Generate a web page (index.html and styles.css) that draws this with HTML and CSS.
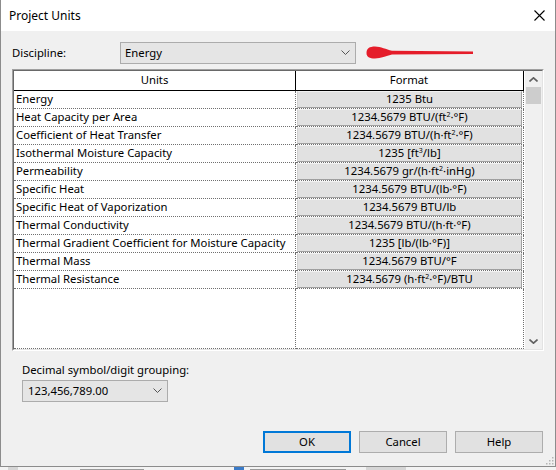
FILE: index.html
```html
<!DOCTYPE html>
<html lang="en">
  <head>
    <meta charset="UTF-8" />
    <title>Project Units</title>
    <link rel="stylesheet" href="styles.css">
  </head>
  <body>
    <div class="dialog">
      <div class="titlebar">
        <span class="title">Project Units</span>
        <svg class="close" width="11" height="11" viewBox="0 0 11 11">
          <path d="M0.5 0.5 L10.5 10.5 M10.5 0.5 L0.5 10.5" stroke="#000" stroke-width="1.1" fill="none" />
        </svg>
      </div>

      <div class="body">
        <div class="discipline">
          <label class="label">Discipline:</label>
          <div class="combo wide">
            <span>Energy</span>
            <svg width="9" height="5" viewBox="0 0 9 5"><path d="M0.5 0.5 L4.5 4.5 L8.5 0.5" stroke="#555" fill="none" /></svg>
          </div>
          <svg class="arrow" width="108" height="13" viewBox="0 0 108 13">
            <path d="M0.5 7 C0.5 2.5 3.5 0.5 9 0.5 C15 0.5 20 3.5 26 4.8 L107 5.4 L107 8 L26 8.6 C20 10 15 12.5 9 12.5 C3.5 12.5 0.5 11 0.5 7 Z" fill="#e51d2a" />
          </svg>
        </div>

        <div class="grid-box">
          <div class="grid-inner">
            <div class="grid">
              <div class="row head">
                <div class="cell units">Units</div>
                <div class="cell format">Format</div>
              </div>
              <div class="row"><div class="cell units">Energy</div><div class="cell format"><span class="val">1235 Btu</span></div></div>
              <div class="row"><div class="cell units">Heat Capacity per Area</div><div class="cell format"><span class="val">1234.5679 BTU/(ft<sup>2</sup>·°F)</span></div></div>
              <div class="row"><div class="cell units">Coefficient of Heat Transfer</div><div class="cell format"><span class="val">1234.5679 BTU/(h·ft<sup>2</sup>·°F)</span></div></div>
              <div class="row"><div class="cell units">Isothermal Moisture Capacity</div><div class="cell format"><span class="val">1235 [ft<sup>3</sup>/lb]</span></div></div>
              <div class="row"><div class="cell units">Permeability</div><div class="cell format"><span class="val">1234.5679 gr/(h·ft<sup>2</sup>·inHg)</span></div></div>
              <div class="row"><div class="cell units">Specific Heat</div><div class="cell format"><span class="val">1234.5679 BTU/(lb·°F)</span></div></div>
              <div class="row"><div class="cell units">Specific Heat of Vaporization</div><div class="cell format"><span class="val">1234.5679 BTU/lb</span></div></div>
              <div class="row"><div class="cell units">Thermal Conductivity</div><div class="cell format"><span class="val">1234.5679 BTU/(h·ft·°F)</span></div></div>
              <div class="row"><div class="cell units">Thermal Gradient Coefficient for Moisture Capacity</div><div class="cell format"><span class="val">1235 [lb/(lb·°F)]</span></div></div>
              <div class="row"><div class="cell units">Thermal Mass</div><div class="cell format"><span class="val">1234.5679 BTU/°F</span></div></div>
              <div class="row"><div class="cell units">Thermal Resistance</div><div class="cell format"><span class="val">1234.5679 (h·ft<sup>2</sup>·°F)/BTU</span></div></div>
              <div class="row filler"><div class="cell units"></div><div class="cell format"></div></div>
            </div>
            <div class="gap"></div>
            <div class="scrollbar">
              <div class="sb-btn">
                <svg width="9" height="5" viewBox="0 0 9 5"><path d="M0.5 4.5 L4.5 0.8 L8.5 4.5" stroke="#606060" stroke-width="1.6" fill="none" /></svg>
              </div>
              <div class="sb-thumb"></div>
              <div class="sb-track"></div>
              <div class="sb-btn">
                <svg width="9" height="5" viewBox="0 0 9 5"><path d="M0.5 0.5 L4.5 4.2 L8.5 0.5" stroke="#606060" stroke-width="1.6" fill="none" /></svg>
              </div>
            </div>
          </div>
        </div>

        <div class="grouping">
          <div class="grouping-label">Decimal symbol/digit grouping:</div>
          <div class="combo narrow">
            <span>123,456,789.00</span>
            <svg width="9" height="5" viewBox="0 0 9 5"><path d="M0.5 0.5 L4.5 4.5 L8.5 0.5" stroke="#555" fill="none" /></svg>
          </div>
        </div>

        <div class="buttons">
          <button class="btn default">OK</button>
          <button class="btn">Cancel</button>
          <button class="btn">Help</button>
        </div>
      </div>
      <svg class="grip" width="9" height="9" viewBox="0 0 9 9">
        <rect x="7" y="1" width="1.5" height="1.5" fill="#b5b5b5" />
        <rect x="4" y="4" width="1.5" height="1.5" fill="#b5b5b5" />
        <rect x="7" y="4" width="1.5" height="1.5" fill="#b5b5b5" />
        <rect x="1" y="7" width="1.5" height="1.5" fill="#b5b5b5" />
        <rect x="4" y="7" width="1.5" height="1.5" fill="#b5b5b5" />
        <rect x="7" y="7" width="1.5" height="1.5" fill="#b5b5b5" />
      </svg>
    </div>
    <!-- app window behind the dialog, only its top edge shows -->
    <div class="backdrop">
      <span class="bd-panel"></span>
      <span class="bd-text w1"></span>
      <span class="bd-icon"></span>
      <span class="bd-text w2"></span>
      <span class="bd-panel right"></span>
    </div>
  </body>
</html>
```

FILE: styles.css
```css
html, body {
  margin: 0;
  padding: 0;
}

body {
  width: 556px;
  height: 470px;
  overflow: hidden;
  background: #f3f3f3;
  font-family: "Noto Sans", "Open Sans", sans-serif;
  font-size: 11.3px;
  color: #000;
}

.dialog {
  position: relative;
  width: 556px;
  height: 467px;
  box-sizing: border-box;
  border: 1px solid #8c8c8c;
  border-top: none;
  background: #f0f0f0;
}

.titlebar {
  height: 31px;
  background: #fff;
  display: flex;
  align-items: center;
  justify-content: space-between;
  padding: 0 10px 0 8px;
  font-size: 12px;
}

.body {
  padding: 0 11px;
}

.discipline {
  margin-top: 11px;
  display: flex;
  align-items: center;
  height: 22px;
}

.label {
  width: 108px;
  padding-bottom: 2px;
}

.combo {
  box-sizing: border-box;
  height: 22px;
  background: #e5e5e5;
  border: 1px solid #acacac;
  display: flex;
  align-items: center;
  justify-content: space-between;
  padding: 0 5px 1px 4px;
}

.combo.wide {
  width: 236px;
}

.combo.narrow {
  width: 146px;
  padding-left: 5px;
  margin-left: 10px;
}

.arrow {
  margin-left: 10px;
  margin-bottom: 1px;
}

/* sunken list box */
.grid-box {
  margin-top: 5px;
  width: 532px;
  height: 282px;
  box-sizing: border-box;
  border: 1px solid;
  border-color: #a0a0a0 #fff #fff #a0a0a0;
}

.grid-inner {
  height: 100%;
  box-sizing: border-box;
  border: 1px solid;
  border-color: #696969 #e3e3e3 #e3e3e3 #696969;
  background: #fff;
  display: flex;
}

.grid {
  display: flex;
  flex-direction: column;
  width: 510px;
}

.row {
  display: flex;
  height: 18px;
  flex: none;
}

.cell {
  box-sizing: border-box;
  height: 100%;
  border-bottom: 1px dotted #707070;
  border-right: 1px dotted #707070;
  white-space: nowrap;
  overflow: hidden;
}

.cell.units {
  width: 282px;
  padding-left: 2px;
  line-height: 15px;
}

.cell.format {
  width: 228px;
  padding: 0 1px;
}

.row.head {
  height: 20px;
}

.row.head .cell {
  border-bottom: 1px solid #000;
  border-right: 1px solid #000;
  text-align: center;
  line-height: 18px;
  padding-left: 0;
}

.val {
  display: block;
  box-sizing: border-box;
  height: 17px;
  background: #e1e1e1;
  border: 1px solid;
  border-color: #f2f2f2 #a0a0a0 #a0a0a0 #d0d0d0;
  text-align: center;
  line-height: 13px;
}

sup {
  font-size: 7px;
  line-height: 0;
  vertical-align: 4px;
}

.row.filler {
  flex: 1;
}

.gap {
  width: 1px;
  background: #fff;
}

.scrollbar {
  width: 17px;
  background: #f0f0f0;
  display: flex;
  flex-direction: column;
}

.sb-btn {
  height: 16px;
  display: flex;
  align-items: center;
  justify-content: center;
}

.sb-thumb {
  height: 17px;
  margin: 0 1px;
  background: #cdcdcd;
}

.sb-track {
  flex: 1;
}

.grouping {
  margin-top: 11px;
}

.grouping-label {
  margin-left: 10px;
  line-height: 16px;
  margin-bottom: 2px;
}

.buttons {
  margin-top: 29px;
  display: flex;
  justify-content: flex-end;
  gap: 8px;
  padding-right: 1px;
}

.btn {
  box-sizing: border-box;
  width: 88px;
  height: 22px;
  background: #e1e1e1;
  border: 1px solid #adadad;
  font-family: inherit;
  font-size: inherit;
  color: #000;
  padding: 0 0 2px;
}

.btn.default {
  border: 2px solid #0078d7;
}

.grip {
  position: absolute;
  right: 1px;
  bottom: 1px;
}

.backdrop {
  height: 3px;
  overflow: hidden;
  display: flex;
  align-items: flex-end;
}

.bd-panel {
  width: 10px;
  height: 3px;
  margin-left: 8px;
  background: #d6d6d6;
}

.bd-panel.right {
  margin-left: auto;
  margin-right: 150px;
  width: 40px;
}

.bd-text {
  height: 1px;
  background: #9a9a9a;
  margin-left: 62px;
}

.bd-text.w1 {
  width: 64px;
}

.bd-icon {
  width: 10px;
  height: 3px;
  margin-left: 90px;
  background: #3a7bc8;
}

.bd-text.w2 {
  width: 96px;
  margin-left: 6px;
}
```
